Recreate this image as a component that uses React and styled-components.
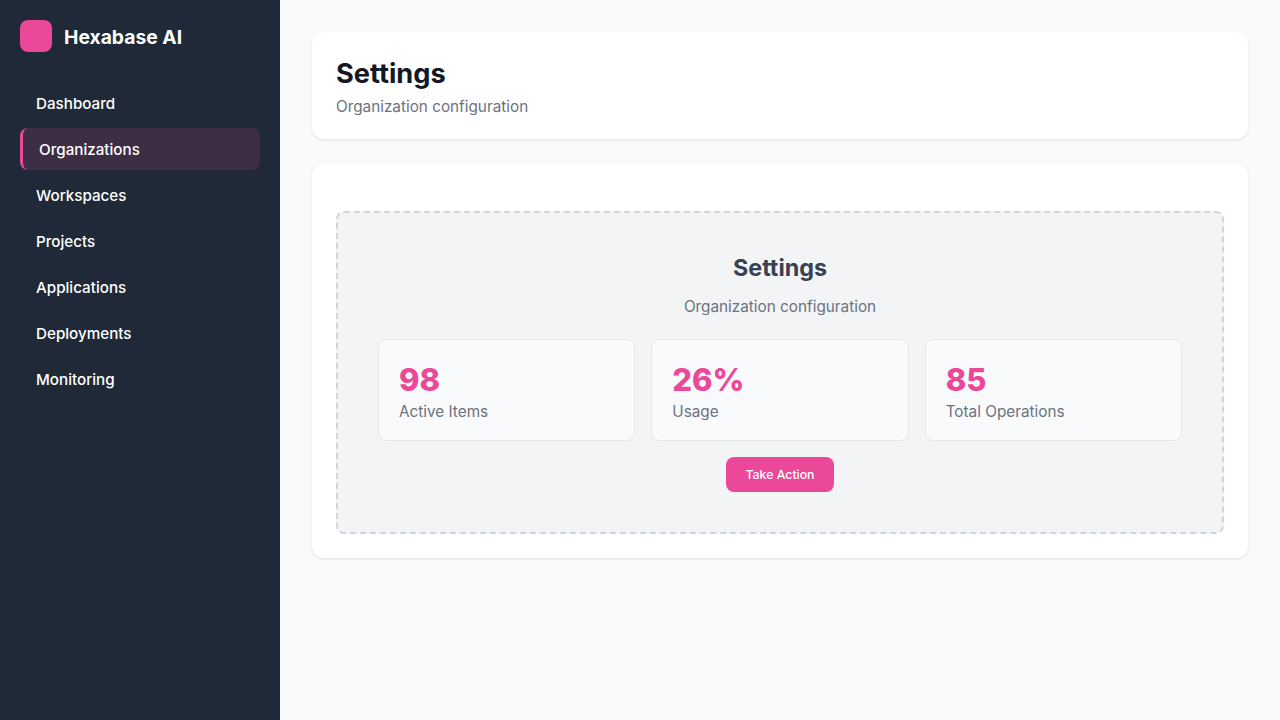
import styled, { createGlobalStyle } from 'styled-components';

const GlobalStyle = createGlobalStyle`
  html, body {
    margin: 0;
    padding: 0;
    background: #f9fafb;
    font-family: Inter, 'Liberation Sans', sans-serif;
  }
  * { box-sizing: border-box; }
`;

const Layout = styled.div`
  display: flex;
  min-height: 720px;
`;

const Sidebar = styled.aside`
  width: 280px;
  flex-shrink: 0;
  background: #1f2937;
  padding: 20px;
`;

const Brand = styled.div`
  display: flex;
  align-items: flex-start;
  gap: 12px;
  margin-bottom: 28px;
`;

const Logo = styled.div`
  width: 32px;
  height: 32px;
  border-radius: 8px;
  background: #ec4899;
`;

const BrandName = styled.span`
  font-size: 19.3px;
  line-height: 34px;
  font-weight: 700;
  color: #ffffff;
`;

const Nav = styled.nav`
  display: flex;
  flex-direction: column;
  gap: 4px;
`;

const NavItem = styled.a`
  display: block;
  height: 42px;
  padding: 12px 16px;
  border-radius: 8px;
  border-left: ${(p) => (p.$active ? '3px solid #ec4899' : 'none')};
  background: ${(p) => (p.$active ? 'rgba(236, 72, 153, 0.15)' : 'transparent')};
  color: #ffffff;
  font-size: 15.2px;
  line-height: 20px;
  font-weight: 500;
`;

const Main = styled.main`
  flex: 1;
  padding: 32px;
  display: flex;
  flex-direction: column;
  gap: 24px;
`;

const Card = styled.section`
  background: #ffffff;
  border-radius: 12px;
  padding: 24px;
  box-shadow: 0 1px 3px rgba(0, 0, 0, 0.1);
`;

const PageTitle = styled.h1`
  margin: 0 0 6px;
  font-size: 27.2px;
  line-height: 36px;
  font-weight: 700;
  color: #111827;
`;

const PageSubtitle = styled.p`
  margin: 0;
  font-size: 15.3px;
  line-height: 17px;
  color: #6b7280;
`;

const ContentCard = styled(Card)`
  padding-top: 48px;
`;

const Placeholder = styled.div`
  background: #f3f4f6;
  border: 2px dashed #d1d5db;
  border-radius: 8px;
  padding: 40px;
  display: flex;
  flex-direction: column;
  align-items: center;
`;

const PanelTitle = styled.h2`
  margin: 0 0 15px;
  font-size: 23.3px;
  line-height: 29px;
  font-weight: 700;
  color: #374151;
`;

const PanelText = styled.p`
  margin: 0 0 23px;
  font-size: 15.3px;
  line-height: 19px;
  color: #6b7280;
`;

const Stats = styled.div`
  width: 100%;
  display: grid;
  grid-template-columns: repeat(3, 1fr);
  gap: 16px;
  margin-bottom: 16px;
`;

const Stat = styled.div`
  background: #f9fafb;
  border: 1px solid #e5e7eb;
  border-radius: 8px;
  padding: 20px;
`;

const StatValue = styled.div`
  margin-bottom: 4px;
  font-size: 31px;
  line-height: 39px;
  font-weight: 800;
  color: #ec4899;
`;

const StatLabel = styled.div`
  font-size: 15.3px;
  line-height: 17px;
  color: #6b7280;
`;

const ActionButton = styled.button`
  height: 35px;
  padding: 0 19px;
  border: none;
  border-radius: 8px;
  background: #ec4899;
  color: #ffffff;
  font-family: inherit;
  font-size: 12.3px;
  font-weight: 500;
`;

const navItems = ['Dashboard', 'Organizations', 'Workspaces', 'Projects', 'Applications', 'Deployments', 'Monitoring'];

const stats = [
  { value: '98', label: 'Active Items' },
  { value: '26%', label: 'Usage' },
  { value: '85', label: 'Total Operations' },
];

export default function App() {
  return (
    <Layout>
      <GlobalStyle />
      <Sidebar>
        <Brand>
          <Logo />
          <BrandName>Hexabase AI</BrandName>
        </Brand>
        <Nav>
          {navItems.map((item) => (
            <NavItem key={item} $active={item === 'Organizations'}>{item}</NavItem>
          ))}
        </Nav>
      </Sidebar>
      <Main>
        <Card>
          <PageTitle>Settings</PageTitle>
          <PageSubtitle>Organization configuration</PageSubtitle>
        </Card>
        <ContentCard>
          <Placeholder>
            <PanelTitle>Settings</PanelTitle>
            <PanelText>Organization configuration</PanelText>
            <Stats>
              {stats.map((s) => (
                <Stat key={s.label}>
                  <StatValue>{s.value}</StatValue>
                  <StatLabel>{s.label}</StatLabel>
                </Stat>
              ))}
            </Stats>
            <ActionButton>Take Action</ActionButton>
          </Placeholder>
        </ContentCard>
      </Main>
    </Layout>
  );
}
